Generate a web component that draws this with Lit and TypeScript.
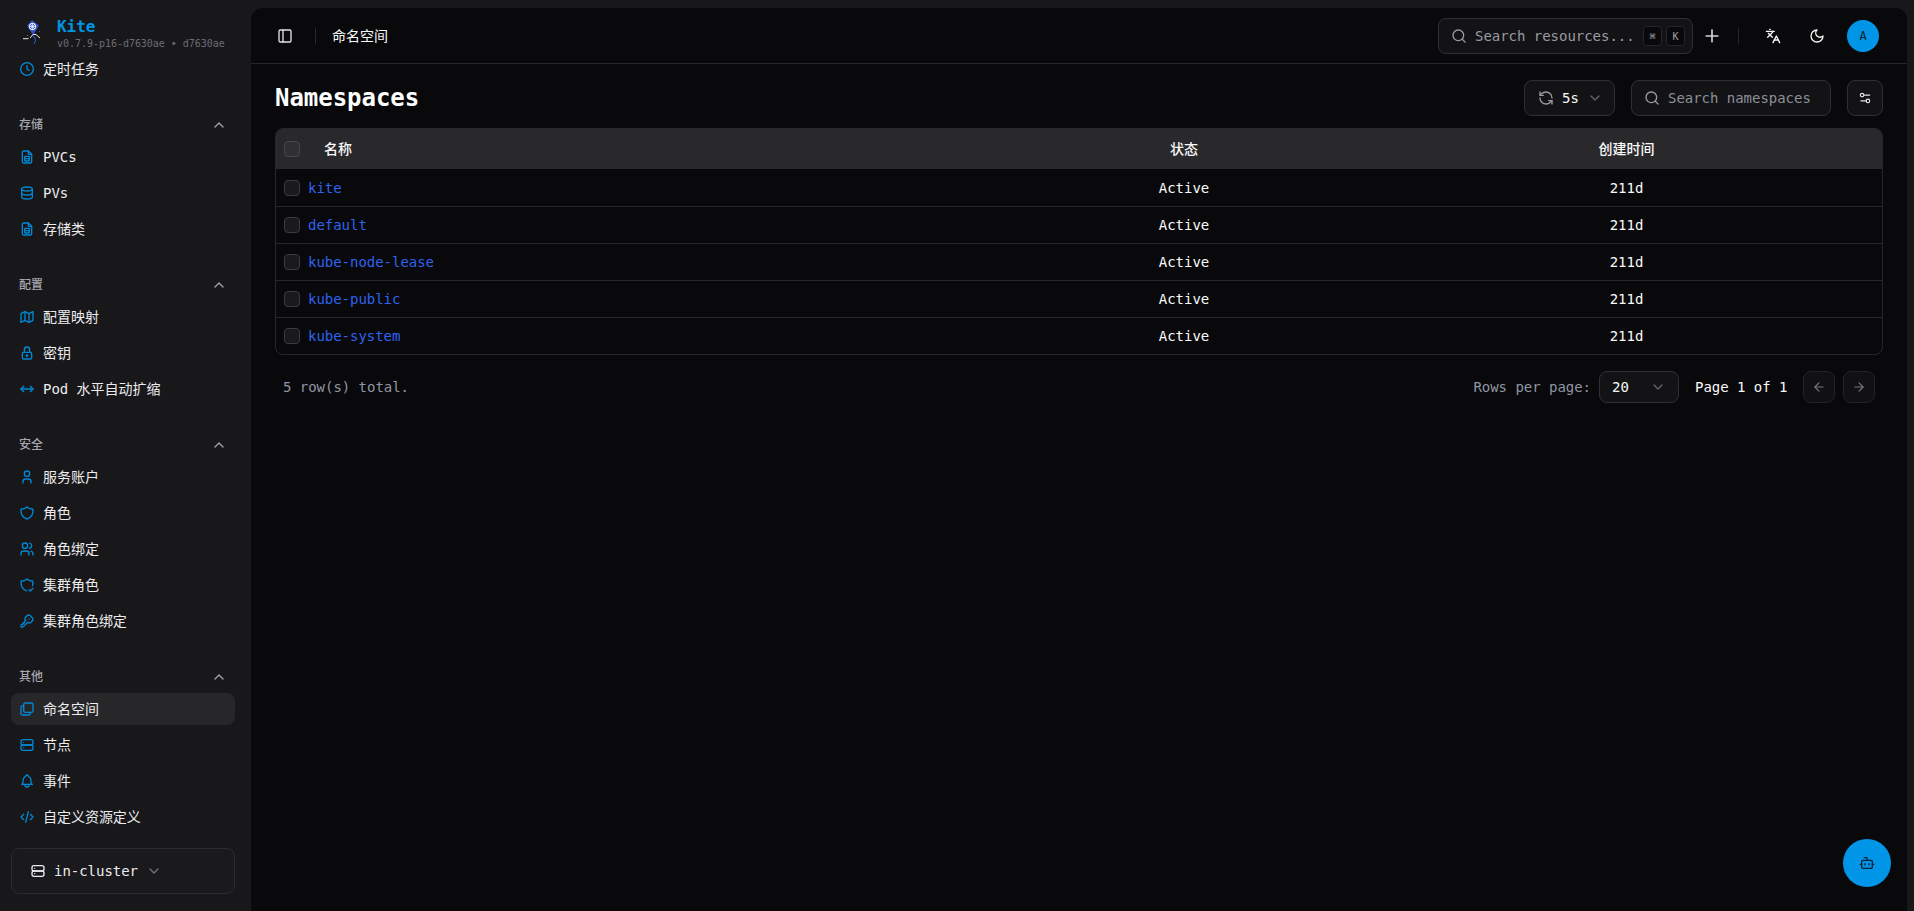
import { LitElement, html, css, svg } from "lit";
import { customElement } from "lit/decorators.js";

const ICONS: Record<string, any> = {
  clock: svg`<circle cx="12" cy="12" r="9.5"/><path d="M12 7v5l3 2"/>`,
  up: svg`<path d="m18 15-6-6-6 6"/>`,
  down: svg`<path d="m6 9 6 6 6-6"/>`,
  file: svg`<path d="M14 3v4a1 1 0 0 0 1 1h4"/><path d="M17 21h-10a2 2 0 0 1-2-2v-14a2 2 0 0 1 2-2h7l5 5v11a2 2 0 0 1-2 2z"/><rect x="8.5" y="11" width="7" height="7" rx="1"/><path d="M8.5 14.5h7"/>`,
  database: svg`<path d="M4 6a8 3 0 1 0 16 0a8 3 0 1 0-16 0"/><path d="M4 6v6a8 3 0 0 0 16 0v-6"/><path d="M4 12v6a8 3 0 0 0 16 0v-6"/>`,
  map: svg`<path d="M3 7l6-3l6 3l6-3v13l-6 3l-6-3l-6 3v-13"/><path d="M9 4v13"/><path d="M15 7v13"/>`,
  lock: svg`<path d="M5 13a2 2 0 0 1 2-2h10a2 2 0 0 1 2 2v6a2 2 0 0 1-2 2h-10a2 2 0 0 1-2-2v-6z"/><path d="M11 16a1 1 0 1 0 2 0a1 1 0 0 0-2 0"/><path d="M8 11v-4a4 4 0 1 1 8 0v4"/>`,
  arrows: svg`<path d="M7 8l-4 4l4 4"/><path d="M17 8l4 4l-4 4"/><path d="M3 12h18"/>`,
  user: svg`<path d="M8 7a4 4 0 1 0 8 0a4 4 0 0 0-8 0"/><path d="M6 21v-2a4 4 0 0 1 4-4h4a4 4 0 0 1 4 4v2"/>`,
  shield: svg`<path d="M12 3a12 12 0 0 0 8.5 3a12 12 0 0 1-8.5 15a12 12 0 0 1-8.5-15a12 12 0 0 0 8.5-3"/>`,
  users: svg`<path d="M5 7a4 4 0 1 0 8 0a4 4 0 1 0-8 0"/><path d="M3 21v-2a4 4 0 0 1 4-4h4a4 4 0 0 1 4 4v2"/><path d="M16 3.13a4 4 0 0 1 0 7.75"/><path d="M21 21v-2a4 4 0 0 0-3-3.85"/>`,
  shieldCheck: svg`<path d="M11.46 20.846a12 12 0 0 1-7.96-14.846a12 12 0 0 0 8.5-3a12 12 0 0 0 8.5 3a12 12 0 0 1-.09 7.06"/><path d="M15 19l2 2l4-4"/>`,
  key: svg`<path d="M16.555 3.843l3.602 3.602a2.877 2.877 0 0 1 0 4.069l-2.643 2.643a2.877 2.877 0 0 1-4.069 0l-.301-.301l-6.558 6.558a2 2 0 0 1-1.239 .578l-.175 .008h-1.172a1 1 0 0 1-.993-.883l-.007-.117v-1.172a2 2 0 0 1 .467-1.284l.119-.13l.414-.414h2v-2h2v-2l2.144-2.144l-.301-.301a2.877 2.877 0 0 1 0-4.069l2.643-2.643a2.877 2.877 0 0 1 4.069 0z"/><path d="M15 9h.01"/>`,
  copies: svg`<rect x="7" y="3" width="14" height="14" rx="2.5"/><path d="M17 17v1.5a2.5 2.5 0 0 1-2.5 2.5h-9A2.5 2.5 0 0 1 3 18.5v-9A2.5 2.5 0 0 1 5.5 7H7"/>`,
  server: svg`<rect x="3" y="4" width="18" height="8" rx="3"/><rect x="3" y="12" width="18" height="8" rx="3"/><path d="M7 8v.01"/><path d="M7 16v.01"/>`,
  bell: svg`<path d="M10 5a2 2 0 1 1 4 0a7 7 0 0 1 4 6v3a4 4 0 0 0 2 3h-16a4 4 0 0 0 2-3v-3a7 7 0 0 1 4-6"/><path d="M9 17v1a3 3 0 0 0 6 0v-1"/>`,
  code: svg`<path d="M7 8l-4 4l4 4"/><path d="M17 8l4 4l-4 4"/><path d="M14 4l-4 16"/>`,
  panel: svg`<rect x="3" y="3" width="18" height="18" rx="2"/><path d="M9 3v18"/>`,
  search: svg`<circle cx="11" cy="11" r="8"/><path d="m21 21-4.3-4.3"/>`,
  plus: svg`<path d="M5 12h14"/><path d="M12 5v14"/>`,
  lang: svg`<path d="m5 8 6 6"/><path d="m4 14 6-6 2-3"/><path d="M2 5h12"/><path d="M7 2h1"/><path d="m22 22-5-10-5 10"/><path d="M14 18h6"/>`,
  moon: svg`<path d="M12 3a6 6 0 0 0 9 9 9 9 0 1 1-9-9Z"/>`,
  refresh: svg`<path d="M21 12a9 9 0 0 0-9-9 9.75 9.75 0 0 0-6.74 2.74L3 8"/><path d="M3 3v5h5"/><path d="M3 12a9 9 0 0 0 9 9 9.75 9.75 0 0 0 6.74-2.74L21 16"/><path d="M16 16h5v5"/>`,
  sliders: svg`<path d="M20 7h-9"/><path d="M14 17H5"/><circle cx="17" cy="17" r="3"/><circle cx="7" cy="7" r="3"/>`,
  left: svg`<path d="m12 19-7-7 7-7"/><path d="M19 12H5"/>`,
  right: svg`<path d="M5 12h14"/><path d="m12 5 7 7-7 7"/>`,
  bot: svg`<path d="M12 8V4H8"/><rect x="4" y="8" width="16" height="12" rx="2"/><path d="M2 14h2"/><path d="M20 14h2"/><path d="M15 13v2"/><path d="M9 13v2"/>`,
};

const icon = (name: string, cls = "") =>
  html`<svg class="ic ${cls}" viewBox="0 0 24 24" fill="none" stroke="currentColor" stroke-width="2" stroke-linecap="round" stroke-linejoin="round">${ICONS[name]}</svg>`;

const GROUPS = [
  { items: [["clock", "定时任务"]] },
  { label: "存储", items: [["file", "PVCs"], ["database", "PVs"], ["file", "存储类"]] },
  { label: "配置", items: [["map", "配置映射"], ["lock", "密钥"], ["arrows", "Pod 水平自动扩缩"]] },
  { label: "安全", items: [["user", "服务账户"], ["shield", "角色"], ["users", "角色绑定"], ["shieldCheck", "集群角色"], ["key", "集群角色绑定"]] },
  { label: "其他", items: [["copies", "命名空间"], ["server", "节点"], ["bell", "事件"], ["code", "自定义资源定义"]] },
];

const ROWS = ["kite", "default", "kube-node-lease", "kube-public", "kube-system"];

@customElement("app-root")
export class AppRoot extends LitElement {
  static styles = css`
    :host {
      display: block;
      height: 911px;
      overflow: hidden;
      background: #18181b;
      color: #fafafa;
      font-family: "DejaVu Sans Mono", "Noto Sans CJK SC", monospace;
      font-size: 14px;
      line-height: 20px;
      letter-spacing: -0.03px;
    }
    * { box-sizing: border-box; }
    .ic { width: 16px; height: 16px; flex: none; display: block; }
    .shell { display: grid; grid-template-columns: 251px 1fr; height: 100%; padding-right: 7px; }

    .side { display: flex; flex-direction: column; height: 911px; min-width: 0; }
    .brand { height: 53px; display: flex; align-items: center; padding: 14px 0 0 20px; gap: 13px; flex: none; }
    .brand svg { width: 24px; height: 24px; flex: none; margin-top: -4px; }
    .brand-text { display: flex; flex-direction: column; }
    .brand-name { font-size: 16px; line-height: 20px; font-weight: 700; color: #0095e0; }
    .brand-ver { font-size: 10px; line-height: 14px; color: #6c6c75; white-space: nowrap; }
    .nav { flex: 1; min-height: 0; padding: 0 16px 0 11px; overflow: hidden; }
    .group { margin-bottom: 24px; display: flex; flex-direction: column; }
    .group-label { height: 32px; flex: none; display: flex; align-items: center; justify-content: space-between; padding: 0 8px; font-size: 12px; font-weight: 500; color: #a6a6ad; }
    .group-label .ic { color: #a1a1aa; }
    .item { height: 32px; flex: none; display: flex; align-items: center; gap: 8px; padding: 0 8px; border-radius: 8px; color: #ececee; white-space: nowrap; }
    .item + .item { margin-top: 4px; }
    .item .ic { color: #0088d4; }
    .item.active { background: #27272a; }
    .foot { flex: none; padding: 0 16px 17px 11px; }
    .cluster { height: 46px; display: flex; align-items: center; gap: 8px; padding: 0 18px; border: 1px solid #2c2c30; border-radius: 8px; background: #1a1a1d; color: #ececee; font-weight: 500; }
    .cluster .ic:last-child { color: #71717a; }

    .main { margin-top: 8px; background: #09090b; border-radius: 12px 12px 0 0; min-width: 0; height: 903px; position: relative; display: flex; flex-direction: column; }
    .top { height: 56px; flex: none; display: flex; align-items: center; border-bottom: 1px solid #27272a; padding: 0 28px 0 26px; }
    .top .panel { color: #e4e4e7; }
    .vsep { width: 1px; height: 16px; background: #27272a; flex: none; }
    .crumb { margin-left: 16px; }
    .top .vsep.a { margin-left: 22px; }
    .spacer { flex: 1; }
    .global { width: 255px; height: 36px; display: flex; align-items: center; gap: 8px; padding: 0 7px 0 12px; border: 1px solid #303034; border-radius: 8px; background: #131316; color: #9a9aa2; white-space: nowrap; flex: none; }
    .global .txt { flex: none; width: 160px; }
    .kbd { width: 19px; height: 20px; display: grid; place-items: center; border: 1px solid #27272a; border-radius: 4px; background: #09090b; font-size: 10px; color: #a1a1aa; }
    .kbd + .kbd { margin-left: -4px; }
    .plus { margin-left: 9px; color: #d4d4d8; width: 20px; height: 20px; }
    .top .vsep.b { margin-left: 16px; }
    .tbtn { width: 32px; display: grid; place-items: center; color: #f4f4f5; }
    .tbtn.l { margin-left: 18px; }
    .tbtn.m { margin-left: 12px; }
    .avatar { width: 32px; height: 32px; margin-left: 14px; border-radius: 50%; background: #0095e6; color: #0b1d2c; display: grid; place-items: center; font-size: 12px; }

    .content { padding: 16px 24px; display: flex; flex-direction: column; }
    .tools { height: 36px; display: flex; align-items: center; gap: 16px; margin-bottom: 12px; }
    h1 { margin: 0; flex: 1; font-size: 24px; line-height: 32px; font-weight: 700; color: #fff; }
    .ctl { height: 36px; display: flex; align-items: center; border: 1px solid #303034; border-radius: 8px; background: #131316; }
    .refresh { width: 91px; gap: 8px; padding: 0 12px 0 13px; font-weight: 500; }
    .refresh .ic:first-child { color: #9a9aa2; }
    .refresh .ic:last-child { color: #62626a; }
    .find { width: 200px; gap: 8px; padding: 0 12px; color: #8b8f99; white-space: nowrap; overflow: hidden; }
    .find .ic { color: #9a9aa2; }
    .cfg { width: 36px; justify-content: center; color: #e4e4e7; }
    .cfg .ic { width: 14px; height: 14px; }

    .table { border: 1px solid #27272a; border-radius: 8px; overflow: hidden; }
    .tr { display: grid; grid-template-columns: 721px 374px 1fr; align-items: center; }
    .tr.head { height: 40px; background: #29292c; font-weight: 500; }
    .tr.body { height: 37px; border-top: 1px solid #27272a; font-weight: 500; }
    .tr.body:nth-child(2) { border-top: 0; }
    .name { display: flex; align-items: center; gap: 8px; padding-left: 8px; min-width: 0; }
    .name.h { gap: 24px; }
    .cb { width: 16px; height: 16px; border: 1px solid #3a3a3f; border-radius: 4px; background: #1a1a1d; flex: none; }
    .head .cb { background: #303034; border-color: #46464b; }
    .c { text-align: center; color: #fafafa; }
    a { color: #2f62ee; text-decoration: none; font-weight: 400; }

    .pager { margin-top: 16px; padding: 0 8px; height: 32px; display: flex; align-items: center; }
    .total { flex: 1; color: #8f96a3; }
    .rpp { color: #8f96a3; }
    .sel { width: 80px; height: 32px; margin-left: 8px; padding: 0 12px; display: flex; align-items: center; justify-content: space-between; border: 1px solid #303034; border-radius: 8px; background: #131316; font-weight: 500; }
    .sel .ic { color: #62626a; }
    .page { margin-left: 16px; width: 92px; flex: none; white-space: nowrap; font-weight: 500; color: #fafafa; }
    .nbtn { width: 32px; height: 32px; display: grid; place-items: center; border: 1px solid #232326; border-radius: 8px; background: #111114; color: #77777f; }
    .nbtn .ic { width: 14px; height: 14px; }
    .nbtn.p { margin-left: 16px; }
    .nbtn.n { margin-left: 8px; }

    .fab { position: absolute; right: 16px; bottom: 24px; width: 48px; height: 48px; border-radius: 50%; background: #0095e6; color: #0a2236; display: grid; place-items: center; }
  `;

  render() {
    return html`
      <div class="shell">
        <aside class="side">
          <div class="brand">
            <svg viewBox="0 0 24 24" fill="none">
              <path d="M12 0 L19 5.5 L13 15.5 L7 5.5 Z" fill="#2f4fc4"/>
              <circle cx="12.5" cy="6.5" r="3.2" stroke="#fff" stroke-width="1"/>
              <path d="M12.5 3v7M9 6.5h7M10 4l5 5M15 4l-5 5" stroke="#fff" stroke-width=".7"/>
              <path d="M13 15.5c1 2 3 3 2.5 5-.3 1.5-1.5 2-1 3.5" stroke="#2f4fc4" stroke-width="1.1"/>
              <path d="M3 18.7h5.5M10 18l3-3.5h3l4 3.5" stroke="#e8e8e8" stroke-width="1"/>
              <path d="M7 15.5h1" stroke="#2faf6a" stroke-width="1"/>
              <path d="M19 11.5h1" stroke="#2f4fc4" stroke-width="1"/>
            </svg>
            <div class="brand-text">
              <div class="brand-name">Kite</div>
              <div class="brand-ver">v0.7.9-p16-d7630ae • d7630ae</div>
            </div>
          </div>
          <nav class="nav">
            ${GROUPS.map(
              (g) => html`<div class="group">
                ${g.label ? html`<div class="group-label"><span>${g.label}</span>${icon("up")}</div>` : ""}
                ${g.items.map(
                  ([ic, t]) => html`<div class="item ${t === "命名空间" ? "active" : ""}">${icon(ic)}<span>${t}</span></div>`
                )}
              </div>`
            )}
          </nav>
          <div class="foot">
            <div class="cluster">${icon("server")}<span>in-cluster</span>${icon("down")}</div>
          </div>
        </aside>
        <main class="main">
          <header class="top">
            ${icon("panel", "panel")}
            <span class="vsep a"></span>
            <span class="crumb">命名空间</span>
            <span class="spacer"></span>
            <div class="global">
              ${icon("search")}<span class="txt">Search resources...</span>
              <span class="kbd">⌘</span><span class="kbd">K</span>
            </div>
            ${icon("plus", "plus")}
            <span class="vsep b"></span>
            <span class="tbtn l">${icon("lang")}</span>
            <span class="tbtn m">${icon("moon")}</span>
            <span class="avatar">A</span>
          </header>
          <section class="content">
            <div class="tools">
              <h1>Namespaces</h1>
              <div class="ctl refresh">${icon("refresh")}<span>5s</span>${icon("down")}</div>
              <div class="ctl find">${icon("search")}<span>Search namespaces</span></div>
              <div class="ctl cfg">${icon("sliders")}</div>
            </div>
            <div class="table">
              <div class="tr head">
                <div class="name h"><span class="cb"></span><span>名称</span></div>
                <div class="c">状态</div>
                <div class="c">创建时间</div>
              </div>
              ${ROWS.map(
                (r) => html`<div class="tr body">
                  <div class="name"><span class="cb"></span><a href="#">${r}</a></div>
                  <div class="c">Active</div>
                  <div class="c">211d</div>
                </div>`
              )}
            </div>
            <div class="pager">
              <span class="total">5 row(s) total.</span>
              <span class="rpp">Rows per page:</span>
              <div class="sel"><span>20</span>${icon("down")}</div>
              <span class="page">Page 1 of 1</span>
              <span class="nbtn p">${icon("left")}</span>
              <span class="nbtn n">${icon("right")}</span>
            </div>
          </section>
          <div class="fab">${icon("bot")}</div>
        </main>
      </div>
    `;
  }
}
